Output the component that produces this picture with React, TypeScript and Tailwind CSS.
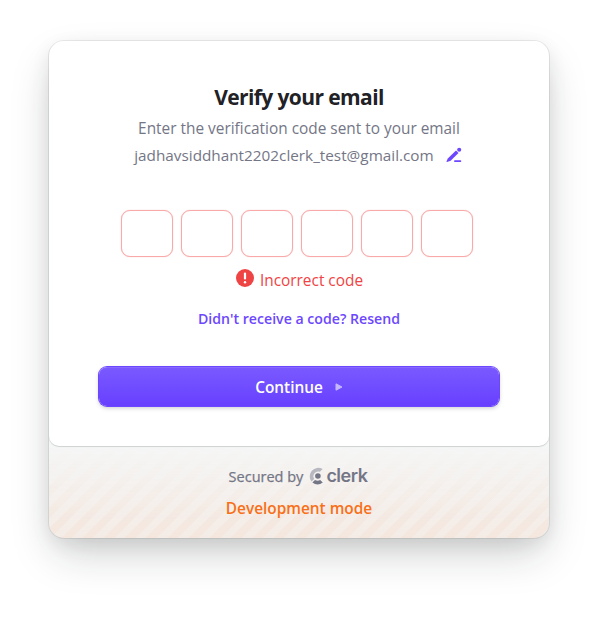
import React from "react";

function CodeInput() {
  return (
    <input
      aria-label="Digit"
      maxLength={1}
      className="h-[47px] w-[52px] rounded-[9px] border border-[#f9a9a9] bg-white text-center shadow-[0_0_1px_rgba(239,68,68,0.4)] outline-none"
    />
  );
}

function ClerkMark() {
  return (
    <svg width="17" height="18" viewBox="0 0 17 18" fill="none" aria-hidden="true">
      <path d="M13.6 2.1a8.5 8.5 0 0 0-11.1 12.5l2.7-2.7A4.8 4.8 0 0 1 10.9 4.8Z" fill="#b8b8c0" />
      <circle cx="8.9" cy="9" r="2.8" fill="#747686" />
      <path d="M3.4 15.5 6 12.9a4.9 4.9 0 0 0 5.2 0l2.6 2.6a8.4 8.4 0 0 1-10.4 0Z" fill="#747686" />
    </svg>
  );
}

export default function App() {
  return (
    <main className="h-[620px] w-[615px] overflow-hidden bg-white pl-[49px] pt-[41px] font-['Open_Sans','Noto_Sans',sans-serif] whitespace-nowrap">
      <div className="h-[497px] w-[500px] rounded-[15px] bg-[#f5f6f6] shadow-[0_0_0_1px_rgba(0,0,0,0.07),0_6px_19px_rgba(0,0,0,0.08),0_19px_44px_-6px_rgba(25,28,33,0.22)]">
        <section className="flex h-[405px] flex-col items-center rounded-t-[15px] rounded-b-[10px] bg-white pt-[41px] shadow-[0_1px_0_rgba(0,0,0,0.1),0_1px_2px_rgba(25,28,33,0.06)]">
          <h1 className="h-[30px] text-[21px] leading-[30px] font-bold tracking-[-0.6px] text-[#212126]">Verify your email</h1>
          <p className="mt-[4px] h-[24px] text-[15.4px] leading-[26px] text-[#747686]">Enter the verification code sent to your email</p>
          <div className="mt-[3px] mr-[2px] flex h-[24px] items-center gap-[12px]">
            <span className="text-[15.3px] leading-[24px] text-[#747686]">jadhavsiddhant2202clerk_test@gmail.com</span>
            <svg width="16" height="16" viewBox="0 0 16 16" aria-label="Edit" fill="#6c47ff">
              <path d="M10 3.6 12.5 6.1 4.6 13.7 1 15.1a.5.5 0 0 1-.5-.5L1.8 11.5Z" />
              <circle cx="13.2" cy="2.8" r="2.05" />
              <rect x="8" y="13.2" width="7.3" height="1.8" rx=".9" />
            </svg>
          </div>
          <div className="mt-[43px] mr-[4px] flex gap-[8px]">
            <CodeInput /><CodeInput /><CodeInput /><CodeInput /><CodeInput /><CodeInput />
          </div>
          <div className="mt-[11px] flex h-[24px] gap-[6px] pl-px">
            <svg width="18" height="18" viewBox="0 0 18 18" className="mt-[1px]" aria-hidden="true">
              <circle cx="9" cy="9" r="9" fill="#ef4444" />
              <path d="M9 4.6v4.8" stroke="white" strokeWidth="2.2" strokeLinecap="round" />
              <circle cx="9" cy="13.2" r="1.2" fill="white" />
            </svg>
            <span className="text-[15.4px] leading-[26px] text-[#ef4444]">Incorrect code</span>
          </div>
          <button className="mt-[15px] h-[24px] text-[14.15px] leading-[24px] font-semibold text-[#6c47ff]">Didn't receive a code? Resend</button>
          <button className="mt-[36px] flex h-[39px] w-[400px] items-center justify-center gap-[12px] rounded-[8px] bg-linear-to-b from-[#7a59ff] to-[#673fff] text-white shadow-[inset_0_1px_0_rgba(255,255,255,0.1),0_0_0_1px_#6c47ff,0_2px_4px_rgba(34,42,53,0.25)]">
            <span className="pt-[3px] text-[15.4px] leading-[24px] font-semibold">Continue</span>
            <svg width="8" height="8" viewBox="0 0 8 8" aria-hidden="true"><path d="M1 .8v6.4L7 4Z" fill="#c5b7ff" stroke="#c5b7ff" strokeWidth="1" strokeLinejoin="round" /></svg>
          </button>
        </section>
        <footer className="relative h-[92px] overflow-hidden rounded-b-[15px]">
          <div className="absolute inset-0 bg-[repeating-linear-gradient(-45deg,rgba(243,107,22,0.07)_0px,rgba(243,107,22,0.07)_7.5px,rgba(243,107,22,0.11)_7.5px,rgba(243,107,22,0.11)_15px)] [mask-image:linear-gradient(transparent,black)]" />
          <div className="relative flex flex-col items-center pt-[18px]">
            <div className="mr-[2px] flex h-[24px] items-center">
              <span className="pt-px text-[14.5px] leading-[24px] font-medium text-[#747686] [-webkit-text-stroke:0.25px_#747686]">Secured by</span>
              <span className="ml-[6px] flex items-center"><ClerkMark /></span>
              <span className="font-['Inter',sans-serif] text-[18px] leading-[24px] font-semibold tracking-[-0.5px] text-[#747686]">clerk</span>
            </div>
            <p className="mt-[8px] h-[24px] text-[15.4px] leading-[26px] font-semibold text-[#f96f18]">Development mode</p>
          </div>
        </footer>
      </div>
    </main>
  );
}
